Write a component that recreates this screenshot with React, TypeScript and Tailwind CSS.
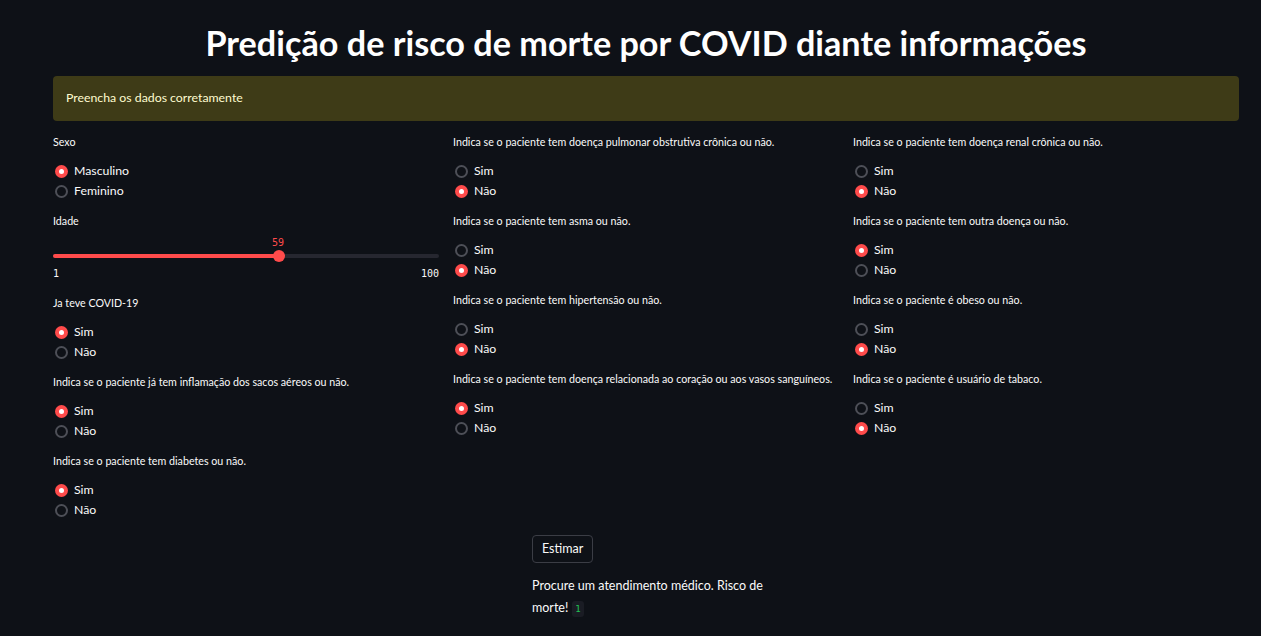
import React from "react";

const font = { fontFamily: '"Source Sans Pro", Lato, "Noto Sans", sans-serif' };
const mono = { fontFamily: '"DejaVu Sans Mono", monospace' };

function Radio({ checked, label }: { checked: boolean; label: string }) {
  return (
    <div className="flex items-center h-[20px]">
      {checked ? (
        <span className="w-[13px] h-[13px] rounded-full bg-[#ff4b4b] flex items-center justify-center ml-[2px]">
          <span className="w-[5px] h-[5px] rounded-full bg-white" />
        </span>
      ) : (
        <span className="w-[13px] h-[13px] rounded-full border-2 border-[#4d4f57] ml-[2px]" />
      )}
      <span className="ml-[6px] text-[12.3px] text-[#fafafa]">{label}</span>
    </div>
  );
}

function Group({ label, options, sel }: { label: string; options: string[]; sel: number }) {
  return (
    <div className="mb-[11px]">
      <div className="text-[10.7px] text-[#fafafa] h-[14px] leading-[14px] mb-[12px]">{label}</div>
      {options.map((o, i) => (
        <Radio key={o} checked={i === sel} label={o} />
      ))}
      <div className="h-[2px]" />
    </div>
  );
}

const SN = ["Sim", "Não"];

export default function App() {
  return (
    <div className="min-h-[636px] w-full bg-[#0e1117] text-[#fafafa]" style={font}>
      <div className="pl-[53px] pr-[22px] pt-[21px]">
        <h1 className="text-center text-[34.2px] font-bold leading-[44px] text-white">
          Predição de risco de morte por COVID diante informações
        </h1>
        <div className="mt-[11px] h-[45px] rounded-[4px] bg-[#3e3b17] flex items-center px-[13px] text-[12.3px] text-[#fffbd0]">
          Preencha os dados corretamente
        </div>
        <div className="grid grid-cols-3 gap-[14px] mt-[14px]">
          <div>
            <Group label="Sexo" options={["Masculino", "Feminino"]} sel={0} />
            <div className="mb-[17px]">
              <div className="text-[10.7px] h-[14px] leading-[14px]">Idade</div>
              <div className="relative h-[51px]">
                <div className="absolute left-0 right-0 top-[26px] h-[4px] rounded bg-[#262730]" />
                <div className="absolute left-0 top-[26px] h-[4px] w-[226px] rounded bg-[#ff4b4b]" />
                <div className="absolute left-[220px] top-[22px] w-[12px] h-[12px] rounded-full bg-[#ff4b4b]" />
                <div className="absolute left-[219px] top-[7px] text-[10px] text-[#ff4b4b]" style={mono}>59</div>
                <div className="absolute left-0 top-[38px] text-[10px] text-[#fafafa]" style={mono}>1</div>
                <div className="absolute right-0 top-[38px] text-[10px] text-[#fafafa]" style={mono}>100</div>
              </div>
            </div>
            <Group label="Ja teve COVID-19" options={SN} sel={0} />
            <Group label="Indica se o paciente já tem inflamação dos sacos aéreos ou não." options={SN} sel={0} />
            <Group label="Indica se o paciente tem diabetes ou não." options={SN} sel={0} />
          </div>
          <div>
            <Group label="Indica se o paciente tem doença pulmonar obstrutiva crônica ou não." options={SN} sel={1} />
            <Group label="Indica se o paciente tem asma ou não." options={SN} sel={1} />
            <Group label="Indica se o paciente tem hipertensão ou não." options={SN} sel={1} />
            <Group label="Indica se o paciente tem doença relacionada ao coração ou aos vasos sanguíneos." options={SN} sel={0} />
          </div>
          <div>
            <Group label="Indica se o paciente tem doença renal crônica ou não." options={SN} sel={1} />
            <Group label="Indica se o paciente tem outra doença ou não." options={SN} sel={0} />
            <Group label="Indica se o paciente é obeso ou não." options={SN} sel={1} />
            <Group label="Indica se o paciente é usuário de tabaco." options={SN} sel={1} />
          </div>
        </div>
        <div className="pl-[479px] mt-[2px]">
          <button className="h-[28px] px-[9px] rounded-[4px] border border-[#3b3d45] bg-[#0e1117] text-[12.5px] text-[#fafafa]">
            Estimar
          </button>
          <div className="mt-[12px] w-[245px] text-[12.5px] leading-[22px] text-[#fafafa]">
            Procure um atendimento médico. Risco de morte!
            <span className="ml-[4px] inline-block rounded-[3px] bg-[#1a1c24] px-[3px] text-[9px] leading-[16px] text-[#21c354]" style={mono}>1</span>
          </div>
        </div>
      </div>
    </div>
  );
}
